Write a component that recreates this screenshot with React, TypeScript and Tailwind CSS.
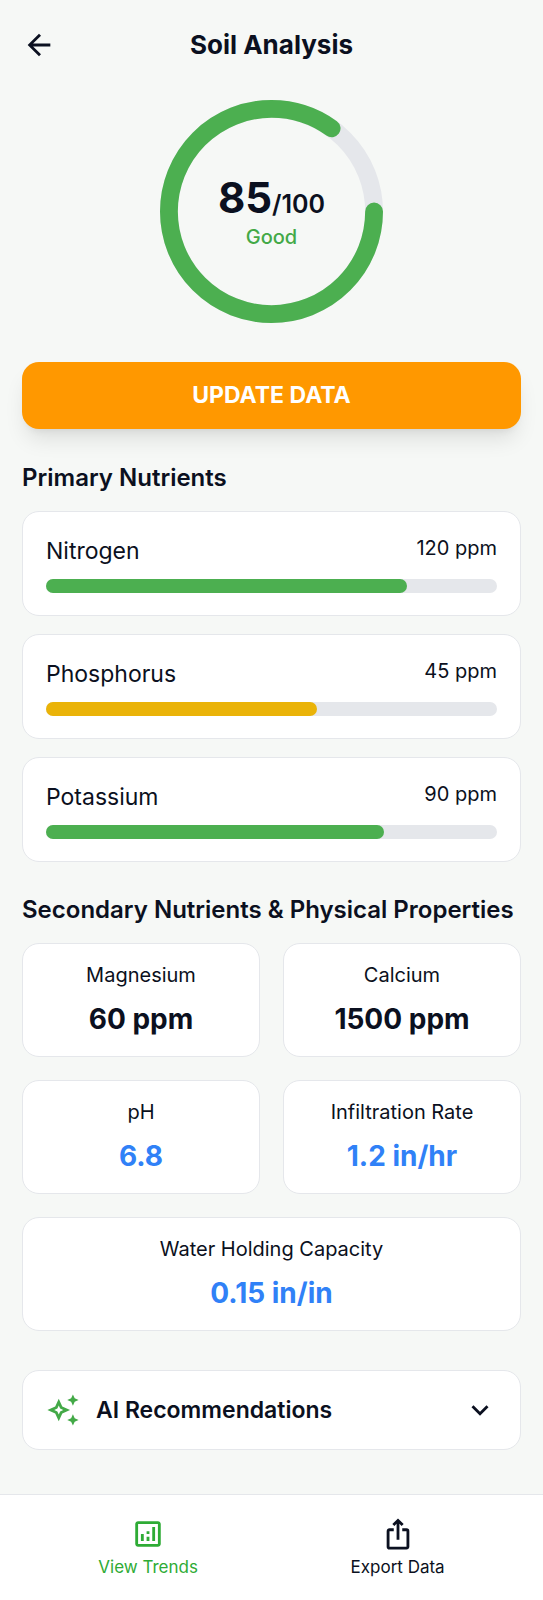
import { MdArrowBack, MdExpandMore, MdIosShare, MdOutlineAnalytics, MdOutlineAutoAwesome } from "react-icons/md";

type Nutrient = { name: string; value: string; percent: number; color: string };
type Property = { name: string; value: string; color: string; wide?: boolean };

const nutrients: Nutrient[] = [
  { name: "Nitrogen", value: "120 ppm", percent: 80, color: "bg-[#4caf50]" },
  { name: "Phosphorus", value: "45 ppm", percent: 60, color: "bg-[#eab308]" },
  { name: "Potassium", value: "90 ppm", percent: 75, color: "bg-[#4caf50]" },
];

const properties: Property[] = [
  { name: "Magnesium", value: "60 ppm", color: "text-[#0b1020]" },
  { name: "Calcium", value: "1500 ppm", color: "text-[#0b1020]" },
  { name: "pH", value: "6.8", color: "text-[#3081f7]" },
  { name: "Infiltration Rate", value: "1.2 in/hr", color: "text-[#3081f7]" },
  { name: "Water Holding Capacity", value: "0.15 in/in", color: "text-[#3081f7]", wide: true },
];

function Header() {
  return (
    <header className="grid grid-cols-[34px_1fr_34px] items-center px-[22px] pt-[22px] pb-[11px]">
      <button type="button" aria-label="Back">
        <MdArrowBack size={34} />
      </button>
      <h1 className="text-center text-[26px] leading-[45px] font-bold">Soil Analysis</h1>
    </header>
  );
}

function ScoreRing({ score }: { score: number }) {
  return (
    <div className="grid justify-center pt-[22px]">
      <svg className="col-start-1 row-start-1 size-[223px]" viewBox="0 0 100 100" fill="none" aria-hidden="true">
        <circle cx="50" cy="50" r="46" stroke="#e5e7eb" strokeWidth="8" />
        <circle
          cx="50"
          cy="50"
          r="46"
          stroke="#4caf50"
          strokeWidth="8"
          strokeLinecap="round"
          pathLength={100}
          strokeDasharray={`${score} 100`}
        />
      </svg>
      <div className="col-start-1 row-start-1 flex flex-col items-center justify-center">
        <p className="text-[42px] leading-[50px] font-bold">
          {score}
          <span className="text-[25px] leading-none font-semibold">/100</span>
        </p>
        <p className="text-[20px] leading-[28px] font-medium text-[#43a947]">Good</p>
      </div>
    </div>
  );
}

function NutrientCard({ name, value, percent, color }: Nutrient) {
  return (
    <li className="rounded-[17px] border border-[#e5e7eb] bg-white px-[23px] py-[22px]">
      <div className="flex justify-between">
        <h3 className="text-[23px] leading-[34px]">{name}</h3>
        <p className="text-[20px] leading-[28px]">{value}</p>
      </div>
      <div className="mt-[11px] h-[14px] rounded-full bg-[#e5e7eb]">
        <div className={`h-full rounded-full ${color}`} style={{ width: `${percent}%` }} />
      </div>
    </li>
  );
}

function PropertyCard({ name, value, color, wide }: Property) {
  return (
    <li className={`rounded-[17px] border border-[#e5e7eb] bg-white p-[17px] text-center ${wide ? "col-span-2" : ""}`}>
      <h3 className="text-[20px] leading-[28px]">{name}</h3>
      <p className={`mt-[11px] text-[28px] leading-[39px] font-bold ${color}`}>{value}</p>
    </li>
  );
}

export default function App() {
  return (
    <div className="flex min-h-screen flex-col bg-[#f6f8f6] font-['Inter',sans-serif] text-[#0b1020]">
      <Header />
      <main className="flex grow flex-col px-[22px] pb-[44px]">
        <ScoreRing score={85} />
        <button
          type="button"
          className="mt-[39px] h-[67px] rounded-[17px] bg-[#ff9800] text-[23px] font-bold text-white shadow-[0_14px_21px_-4px_rgb(0_0_0/0.1),0_6px_8px_-6px_rgb(0_0_0/0.1)]"
        >
          UPDATE DATA
        </button>

        <h2 className="mt-[31px] text-[24px] leading-[35px] font-semibold">Primary Nutrients</h2>
        <ul className="mt-[16px] flex flex-col gap-[18px]">
          {nutrients.map((n) => (
            <NutrientCard key={n.name} {...n} />
          ))}
        </ul>

        <h2 className="mt-[30px] text-[24px] leading-[35px] font-semibold">Secondary Nutrients &amp; Physical Properties</h2>
        <ul className="mt-[16px] grid grid-cols-2 gap-[23px]">
          {properties.map((p) => (
            <PropertyCard key={p.name} {...p} />
          ))}
        </ul>

        <button
          type="button"
          aria-expanded="false"
          className="mt-[39px] flex items-center rounded-[17px] border border-[#e5e7eb] bg-white px-[23px] py-[22px] text-[23px] leading-[34px] font-semibold"
        >
          <MdOutlineAutoAwesome size={34} className="text-[#43a947]" aria-hidden="true" />
          <span className="grow pl-[16px] text-left">AI Recommendations</span>
          <MdExpandMore size={34} aria-hidden="true" />
        </button>
      </main>
      <nav className="flex justify-around border-t border-[#e5e7eb] bg-white p-[22px] text-[17px] leading-[22px]">
        <a href="#trends" className="flex flex-col items-center gap-[5px] text-[#2eab35]">
          <MdOutlineAnalytics size={34} aria-hidden="true" />
          View Trends
        </a>
        <a href="#export" className="flex flex-col items-center gap-[5px]">
          <MdIosShare size={34} aria-hidden="true" />
          Export Data
        </a>
      </nav>
    </div>
  );
}
